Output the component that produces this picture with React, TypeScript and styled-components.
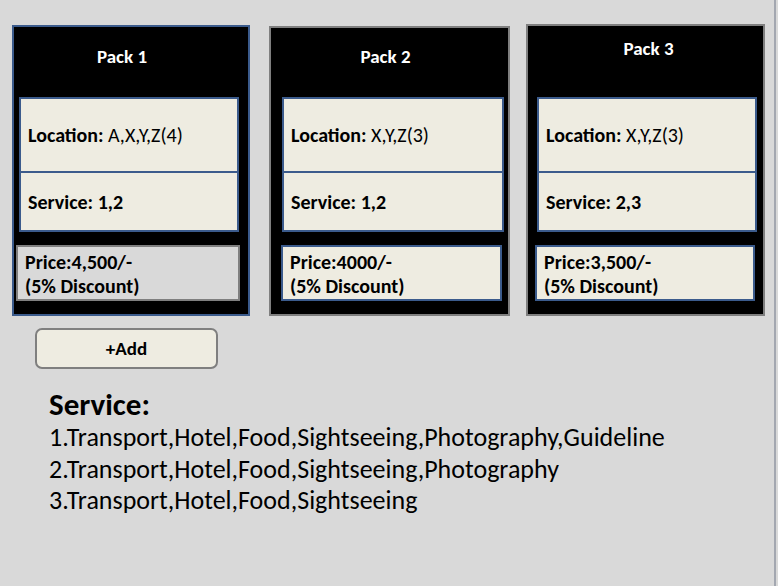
import React from 'react';
import styled, { createGlobalStyle } from 'styled-components';

const GlobalStyle = createGlobalStyle`
  html, body {
    margin: 0;
    padding: 0;
    background: #d9d9d9;
  }
  body {
    font-family: Calibri, Carlito, "Open Sans", "Noto Sans", sans-serif;
  }
`;

const Page = styled.div`
  width: 776px;
  height: 586px;
  box-sizing: border-box;
  background: #d9d9d9;
  border-right: 2px solid #a3a7b0;
  padding: 24px 0 0 12px;
`;

const CardRow = styled.div`
  display: flex;
  align-items: flex-start;
`;

const Card = styled.div<{ $w: number; $gap: number; $top: number; $edge: 'blue' | 'gray' }>`
  width: ${(p) => p.$w}px;
  height: ${(p) => 292 - p.$top}px;
  margin-left: ${(p) => p.$gap}px;
  margin-top: ${(p) => p.$top}px;
  box-sizing: border-box;
  background: #000;
  border: 2px solid ${(p) => (p.$edge === 'blue' ? '#3b5b8c' : '#7f7f7f')};
  display: flex;
  flex-direction: column;
`;

const Title = styled.div<{ $h: number; $lift: number; $shift: number }>`
  height: ${(p) => p.$h}px;
  padding-bottom: ${(p) => p.$lift}px;
  padding-left: ${(p) => Math.max(0, p.$shift * 2)}px;
  padding-right: ${(p) => Math.max(0, -p.$shift * 2)}px;
  box-sizing: border-box;
  display: flex;
  align-items: center;
  justify-content: center;
  color: #fff;
  font-weight: 700;
  font-size: 19px;
`;

const Details = styled.div<{ $left: number; $w: number }>`
  margin-left: ${(p) => p.$left}px;
  width: ${(p) => p.$w}px;
  box-sizing: border-box;
  border: 2px solid #3b5b8c;
  background: #eeece1;
  display: flex;
  flex-direction: column;
`;

const DetailRow = styled.div<{ $h: number; $divider?: boolean }>`
  height: ${(p) => p.$h}px;
  box-sizing: border-box;
  border-top: ${(p) => (p.$divider ? '2px solid #3b5b8c' : 'none')};
  display: flex;
  align-items: center;
  padding-left: 7px;
  font-size: 20px;
  color: #000;
  white-space: pre;
`;

const Strong = styled.b`
  font-weight: 700;
`;

const Price = styled.div<{ $left: number; $w: number; $muted: boolean }>`
  margin-top: 13px;
  margin-left: ${(p) => p.$left}px;
  width: ${(p) => p.$w}px;
  height: 56px;
  box-sizing: border-box;
  border: 2px solid ${(p) => (p.$muted ? '#7f7f7f' : '#3b5b8c')};
  background: ${(p) => (p.$muted ? '#d9d9d9' : '#eeece1')};
  padding: 3px 0 0 7px;
  font-weight: 700;
  font-size: 20px;
  line-height: 24px;
  color: #000;
  white-space: nowrap;
`;

const AddButton = styled.button`
  display: block;
  margin: 12px 0 0 23px;
  width: 183px;
  height: 41px;
  box-sizing: border-box;
  border: 2px solid #7f7f7f;
  border-radius: 7px;
  background: #eeece1;
  font-family: inherit;
  font-weight: 700;
  font-size: 19px;
  color: #000;
`;

const ServiceList = styled.div`
  margin: 17px 0 0 37px;
  color: #000;
`;

const ServiceHeading = styled.div`
  font-weight: 700;
  font-size: 31px;
  line-height: 36px;
`;

const ServiceLine = styled.div`
  font-size: 26px;
  line-height: 31.5px;
`;

const packs = [
  { name: 'Pack 1', loc: 'A,X,Y,Z(4)', svc: '1,2', price: 'Price:4,500/-', w: 238, gap: 0, top: 1, edge: 'blue' as const, th: 70, lift: 12, shift: -9, dl: 5, dw: 220, pl: 2, pw: 224, muted: true },
  { name: 'Pack 2', loc: 'X,Y,Z(3)', svc: '1,2', price: 'Price:4000/-', w: 241, gap: 19, top: 2, edge: 'gray' as const, th: 69, lift: 12, shift: -4, dl: 11, dw: 222, pl: 10, pw: 221, muted: false },
  { name: 'Pack 3', loc: 'X,Y,Z(3)', svc: '2,3', price: 'Price:3,500/-', w: 239, gap: 16, top: 0, edge: 'gray' as const, th: 71, lift: 27, shift: 3, dl: 9, dw: 220, pl: 7, pw: 220, muted: false },
];

const services = [
  '1.Transport,Hotel,Food,Sightseeing,Photography,Guideline',
  '2.Transport,Hotel,Food,Sightseeing,Photography',
  '3.Transport,Hotel,Food,Sightseeing',
];

const App: React.FC = () => {
  return (
    <Page>
      <GlobalStyle />
      <CardRow>
        {packs.map((p) => (
          <Card key={p.name} $w={p.w} $gap={p.gap} $top={p.top} $edge={p.edge}>
            <Title $h={p.th} $lift={p.lift} $shift={p.shift}>{p.name}</Title>
            <Details $left={p.dl} $w={p.dw}>
              <DetailRow $h={72}>
                <Strong>Location: </Strong>
                {p.loc}
              </DetailRow>
              <DetailRow $h={59} $divider>
                <Strong>Service: {p.svc}</Strong>
              </DetailRow>
            </Details>
            <Price $left={p.pl} $w={p.pw} $muted={p.muted}>
              {p.price}
              <br />
              (5% Discount)
            </Price>
          </Card>
        ))}
      </CardRow>
      <AddButton>+Add</AddButton>
      <ServiceList>
        <ServiceHeading>Service:</ServiceHeading>
        {services.map((s) => (
          <ServiceLine key={s}>{s}</ServiceLine>
        ))}
      </ServiceList>
    </Page>
  );
};

export default App;
